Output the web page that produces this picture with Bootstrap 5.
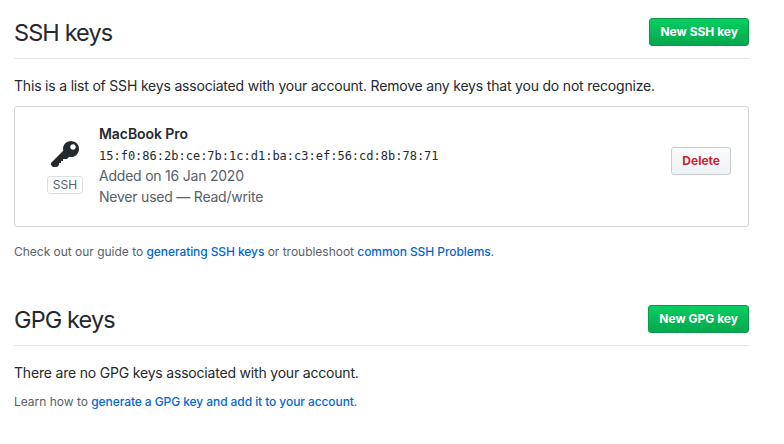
<!DOCTYPE html>
<html lang="en">
<head>
<meta charset="utf-8">
<meta name="viewport" content="width=device-width, initial-scale=1">
<title>SSH and GPG keys</title>
<link href="https://cdn.jsdelivr.net/npm/bootstrap@5.3.0/dist/css/bootstrap.min.css" rel="stylesheet">
<style>
body { font-family: Inter, "Liberation Sans", sans-serif; font-size: 14px; line-height: 21px; color: #24292e; background: #fff; overflow: hidden; }
.settings { width: 735px; margin-left: 14px; padding-top: 18px; }
.subhead { height: 41px; border-bottom: 1px solid #e1e4e8; margin-bottom: 16px; }
.subhead h2 { font-size: 23.5px; line-height: 30px; font-weight: 400; letter-spacing: -.9px; }
.intro { letter-spacing: -.19px; margin-bottom: 10px; }
.btn-key { font-size: 12px; line-height: 18px; font-weight: 700; padding: 4px 10px; border-radius: 3px; letter-spacing: 0; white-space: nowrap; }
.btn-new { color: #fff; border: 1px solid #0a9a48; background: linear-gradient(180deg, #06cf62, #05a74c); }
.btn-del { color: #cb2431; border: 1px solid #c8ccd0; background: linear-gradient(180deg, #fafbfc, #eff3f6); }
.key-box { height: 121px; border: 1px solid #d1d5da; border-radius: 3px; padding: 16px 17px 0 32px; margin-bottom: 16px; }
.key-kind { width: 36px; margin-right: 16px; padding-top: 16px; }
.key-kind svg { display: block; }
.kind-label { font-size: 12px; line-height: 16px; color: #586069; border: 1px solid #dcdfe3; border-radius: 3px; width: 36px; margin-top: 5px; }
.key-title { letter-spacing: -.07px; font-weight: 600; }
.key-title, .fingerprint, .meta { height: 21px; white-space: nowrap; }
.fingerprint { font: 12px/25px "DejaVu Sans Mono", monospace; }
.meta { color: #586069; letter-spacing: -.22px; }
.hint { font-size: 12px; line-height: 18px; color: #586069; letter-spacing: -.02px; }
.hint a { color: #0366d6; font-weight: 500; letter-spacing: -.08px; }
.gpg { padding-top: 44px; }
</style>
<script src="https://cdn.jsdelivr.net/npm/bootstrap@5.3.0/dist/js/bootstrap.bundle.min.js"></script>
</head>
<body>
<main class="settings">
  <section>
    <div class="subhead d-flex justify-content-between align-items-start">
      <h2 class="mb-0">SSH keys</h2>
      <button type="button" class="btn btn-key btn-new">New SSH key</button>
    </div>
    <p class="intro">This is a list of SSH keys associated with your account. Remove any keys that you do not recognize.</p>
    <div class="key-box d-flex">
      <div class="key-kind d-flex flex-column align-items-center">
        <svg width="28" height="32" viewBox="0 0 14 16" fill="#24292e" aria-hidden="true"><path fill-rule="evenodd" d="M12.83 2.17C12.08 1.42 11.14 1.03 10 1c-1.13.03-2.08.42-2.83 1.17S6.04 3.86 6.01 5c0 .3.03.59.09.89L0 12v1l1 1h2l1-1v-1h1v-1h1v-1h2l1.09-1.11c.3.08.59.11.91.11 1.14-.03 2.08-.42 2.83-1.17S13.97 6.14 14 5c-.03-1.14-.42-2.08-1.17-2.83zM11 5.38c-.77 0-1.38-.61-1.38-1.38 0-.77.61-1.38 1.38-1.38.77 0 1.38.61 1.38 1.38 0 .77-.61 1.38-1.38 1.38z"/></svg>
        <span class="kind-label text-center">SSH</span>
      </div>
      <div class="flex-grow-1">
        <div class="key-title">MacBook Pro</div>
        <div class="fingerprint">15:f0:86:2b:ce:7b:1c:d1:ba:c3:ef:56:cd:8b:78:71</div>
        <div class="meta">Added on 16 Jan 2020</div>
        <div class="meta">Never used — Read/write</div>
      </div>
      <div class="pt-4"><button type="button" class="btn btn-key btn-del">Delete</button></div>
    </div>
    <p class="hint mb-0">Check out our guide to <a class="text-decoration-none" href="#">generating SSH keys</a> or troubleshoot <a class="text-decoration-none" href="#">common SSH Problems</a>.</p>
  </section>
  <section class="gpg">
    <div class="subhead d-flex justify-content-between align-items-start">
      <h2 class="mb-0">GPG keys</h2>
      <button type="button" class="btn btn-key btn-new">New GPG key</button>
    </div>
    <p class="intro">There are no GPG keys associated with your account.</p>
    <p class="hint mb-0">Learn how to <a class="text-decoration-none" href="#">generate a GPG key and add it to your account</a>.</p>
  </section>
</main>
</body>
</html>
